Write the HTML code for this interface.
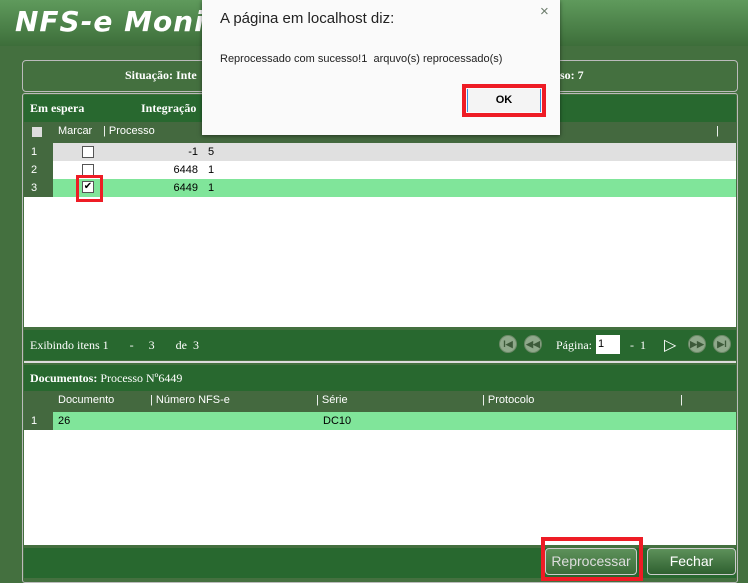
<!DOCTYPE html><html><head><style>
body{margin:0;width:748px;height:583px;background:#44703f;position:relative;overflow:hidden;font-family:"Liberation Sans",sans-serif}
div{position:absolute;box-sizing:border-box}
.t{font-family:"Liberation Serif",serif;font-weight:bold;color:#fff;font-size:12px}
.h{color:#fff;font-size:11px}
.n{font-size:11px;color:#000}
.cb{width:12px;height:12px;border:1px solid #555;background:#fff}
.ic{width:18px;height:18px;border-radius:50%;background:#8fa98b;border:1px solid #6d8a69;color:#3d5a3a;font-size:9px;text-align:center;line-height:16px;font-weight:bold}
</style></head><body>
<div style="left:0;top:0;width:748px;height:46px;background:linear-gradient(#5f9a5c,#3d6e3a)"></div>
<div style="left:15px;top:5px;font:italic bold 28px 'DejaVu Sans',sans-serif;color:#fff;letter-spacing:1px">NFS-e Moni</div>
<div style="left:22px;top:60px;width:716px;height:32px;border:1px solid #bbb;border-radius:4px"></div>
<div class="t" style="left:125px;top:68px">Situação: Inte</div>
<div class="t" style="left:560px;top:68px">so: 7</div>
<div style="left:22px;top:93px;width:716px;height:490px;border:1px solid #bbb;border-radius:3px"></div>
<div style="left:24px;top:95px;width:712px;height:27px;background:#28682f"></div>
<div class="t" style="left:30px;top:101px">Em espera</div>
<div class="t" style="left:141px;top:101px">Integração</div>
<div style="left:24px;top:122px;width:712px;height:21px;background:#44693f"></div>
<div style="left:32px;top:127px;width:10px;height:10px;background:#ddd"></div>
<div class="h" style="left:58px;top:125px">Marcar</div>
<div class="h" style="left:103px;top:125px">| Processo</div>
<div class="h" style="left:716px;top:125px">|</div>
<div style="left:24px;top:143px;width:712px;height:184px;background:#fff"></div>
<div style="left:24px;top:143px;width:29px;height:54px;background:#44693f"></div>
<div style="left:53px;top:143px;width:683px;height:18px;background:#e0e0e0"></div>
<div style="left:53px;top:179px;width:683px;height:18px;background:#80e59a"></div>
<div class="h" style="left:31px;top:146px">1</div><div class="h" style="left:31px;top:164px">2</div><div class="h" style="left:31px;top:182px">3</div>
<div class="cb" style="left:82px;top:146px"></div><div class="cb" style="left:82px;top:164px"></div>
<div class="cb" style="left:82px;top:181px;font-size:10px;line-height:10px;text-align:center">✔</div>
<div style="left:76px;top:175px;width:27px;height:27px;border:3px solid #ee1c25"></div>
<div class="n" style="left:170px;top:146px;width:28px;text-align:right">-1</div><div class="n" style="left:208px;top:146px">5</div>
<div class="n" style="left:170px;top:164px;width:28px;text-align:right">6448</div><div class="n" style="left:208px;top:164px">1</div>
<div class="n" style="left:170px;top:182px;width:28px;text-align:right">6449</div><div class="n" style="left:208px;top:182px">1</div>
<div style="left:24px;top:330px;width:712px;height:30px;background:#28682f"></div>
<div class="t" style="left:30px;top:338px;font-weight:normal">Exibindo itens 1 &nbsp; &nbsp; &nbsp; - &nbsp; &nbsp; 3 &nbsp; &nbsp; &nbsp; de &nbsp;3</div>
<div class="ic" style="left:499px;top:335px">I◀</div><div class="ic" style="left:524px;top:335px">◀◀</div>
<div class="t" style="left:556px;top:338px;font-weight:normal">Página:</div>
<div style="left:596px;top:335px;width:24px;height:19px;background:#fff;font-size:11px;padding:3px 2px">1</div>
<div class="t" style="left:630px;top:338px;font-weight:normal">- &nbsp;1</div>
<div class="h" style="left:664px;top:335px;font-size:16px">▷</div>
<div class="ic" style="left:688px;top:335px">▶▶</div><div class="ic" style="left:713px;top:335px">▶I</div>
<div style="left:24px;top:361px;width:712px;height:2px;background:#ddd"></div>
<div style="left:24px;top:365px;width:712px;height:26px;background:#28682f"></div>
<div class="t" style="left:30px;top:371px">Documentos: <span style="font-weight:normal">Processo Nº6449</span></div>
<div style="left:24px;top:391px;width:712px;height:21px;background:#44693f"></div>
<div class="h" style="left:58px;top:394px">Documento</div>
<div class="h" style="left:150px;top:394px">| Número NFS-e</div>
<div class="h" style="left:316px;top:394px">| Série</div>
<div class="h" style="left:482px;top:394px">| Protocolo</div>
<div class="h" style="left:680px;top:394px">|</div>
<div style="left:24px;top:412px;width:712px;height:133px;background:#fff"></div>
<div style="left:24px;top:412px;width:29px;height:18px;background:#44693f"></div>
<div style="left:53px;top:412px;width:683px;height:18px;background:#80e59a"></div>
<div class="h" style="left:31px;top:415px">1</div>
<div class="n" style="left:58px;top:415px">26</div><div class="n" style="left:323px;top:415px">DC10</div>
<div style="left:24px;top:548px;width:712px;height:30px;background:#28682f"></div>
<div style="left:545px;top:548px;width:92px;height:27px;border:1px solid #ccc;border-radius:4px;background:linear-gradient(#5d915a,#3c6d3a);color:#ddd;font-size:14px;text-align:center;line-height:25px">Reprocessar</div>
<div style="left:541px;top:537px;width:102px;height:44px;border:4px solid #ee1c25"></div>
<div style="left:647px;top:548px;width:89px;height:27px;border:1px solid #ccc;border-radius:4px;background:linear-gradient(#5d915a,#2f6030);color:#fff;font-size:14px;text-align:center;line-height:25px">Fechar</div>
<div style="left:202px;top:0;width:358px;height:135px;background:#fafafa;box-shadow:0 1px 4px rgba(0,0,0,.5)"></div>
<div style="left:220px;top:10px;font-size:15px;color:#222">A página em localhost diz:</div>
<div style="left:540px;top:3px;font-size:15px;color:#6b7b6b">×</div>
<div style="left:220px;top:53px;font-size:11px;color:#222">Reprocessado com sucesso!1 &nbsp;arquvo(s) reprocessado(s)</div>
<div style="left:462px;top:84px;width:84px;height:33px;border:4px solid #ee1c25"></div>
<div style="left:467px;top:89px;width:74px;height:23px;background:#f4f4f4;border-left:1px solid #3a8ee0;border-right:1px solid #3a8ee0;font-weight:bold;font-size:11px;text-align:center;line-height:23px">OK</div>
</body></html>
